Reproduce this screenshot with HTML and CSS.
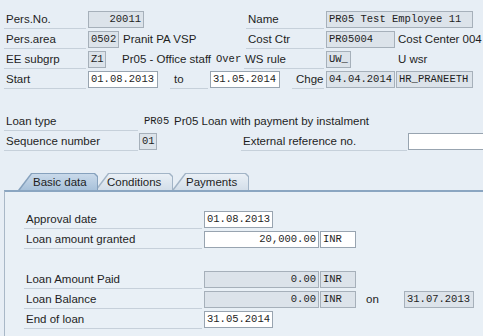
FILE: index.html
```html
<!DOCTYPE html>
<html>
<head>
  <meta charset="UTF-8">
  <title>Loan</title>
  <link rel="stylesheet" href="styles.css">
</head>
<body>
  <div class="screen">
    <div class="header">
      <div class="row">
        <span class="lbl w82">Pers.No.</span>
        <span class="fld ro right w56">20011</span>
        <span class="lbl w78 ml102">Name</span>
        <span class="fld ro w147">PR05 Test Employee 11</span>
      </div>
      <div class="row">
        <span class="lbl w82">Pers.area</span>
        <span class="fld ro w31">0502</span>
        <span class="txt w123 ml4">Pranit PA VSP</span>
        <span class="lbl w78">Cost Ctr</span>
        <span class="fld ro w69">PR05004</span>
        <span class="txt ml3">Cost Center 004</span>
      </div>
      <div class="row">
        <span class="lbl w82">EE subgrp</span>
        <span class="fld ro w18">Z1</span>
        <span class="txt w94 ml16">Pr05 - Office staff</span>
        <span class="mono w28">Over</span>
        <span class="lbl w80 tight">WS rule</span>
        <span class="fld ro w25">UW_</span>
        <span class="txt ml47">U wsr</span>
      </div>
      <div class="row">
        <span class="lbl w82">Start</span>
        <span class="fld w70">01.08.2013</span>
        <span class="lbl w38 ml12 pad4">to</span>
        <span class="fld w70">31.05.2014</span>
        <span class="lbl w32 ml12 pad4">Chge</span>
        <span class="fld ro w69">04.04.2014</span>
        <span class="fld ro w77 ml1">HR_PRANEETH</span>
      </div>
    </div>

    <div class="loan">
      <div class="row">
        <span class="lbl w134">Loan type</span>
        <span class="mono ml6 w28">PR05</span>
        <span class="txt ml2">Pr05 Loan with payment by instalment</span>
      </div>
      <div class="row">
        <span class="lbl w134">Sequence number</span>
        <span class="fld ro w18 ml1">01</span>
        <span class="lbl w166 ml84">External reference no.</span>
        <span class="fld w80 ml1"></span>
      </div>
    </div>

    <div class="tabs">
      <div class="tab active"><span>Basic data</span></div>
      <div class="tab second"><span>Conditions</span></div>
      <div class="tab third"><span>Payments</span></div>
    </div>

    <div class="panel">
      <div class="row">
        <span class="lbl w178">Approval date</span>
        <span class="fld w69">01.08.2013</span>
      </div>
      <div class="row">
        <span class="lbl w178">Loan amount granted</span>
        <span class="fld right w115">20,000.00</span>
        <span class="fld w36 ml1">INR</span>
      </div>
      <div class="row"></div>
      <div class="row">
        <span class="lbl w178">Loan Amount Paid</span>
        <span class="fld ro right w115">0.00</span>
        <span class="fld ro w36 ml1">INR</span>
      </div>
      <div class="row">
        <span class="lbl w178">Loan Balance</span>
        <span class="fld ro right w115">0.00</span>
        <span class="fld ro w36 ml1">INR</span>
        <span class="txt w36 ml10">on</span>
        <span class="fld ro w70">31.07.2013</span>
      </div>
      <div class="row">
        <span class="lbl w178">End of loan</span>
        <span class="fld w69">31.05.2014</span>
      </div>
    </div>
  </div>
</body>
</html>
```

FILE: styles.css
```css
:root {
  --bg: #e7eef5;
  --text: #1e1e1e;
  --line: #c6d0da;
  --ro-fill: #dce3ea;
  --ro-border: #a6b0ba;
  --in-border: #98a4b0;
  --tab-line: #8ba6c1;
}

body {
  margin: 0;
  width: 483px;
  height: 336px;
  overflow: hidden;
  background: var(--bg);
  color: var(--text);
  font-family: 'Liberation Sans', Arial, sans-serif;
  font-size: 11.5px;
}

.screen {
  padding: 10px 0 0 4px;
}

.row {
  display: flex;
  align-items: flex-start;
  height: 20px;
  white-space: nowrap;
}

.lbl {
  box-sizing: border-box;
  flex: none;
  height: 19px;
  line-height: 18px;
  padding-left: 2px;
  border-bottom: 1px solid var(--line);
  overflow: hidden;
}

.lbl.tight { padding-left: 1px; }
.lbl.pad4 { padding-left: 4px; }

.txt {
  flex: none;
  line-height: 18px;
}

.mono {
  flex: none;
  font-family: 'Liberation Mono', 'Courier New', monospace;
  font-size: 10.5px;
  line-height: 18px;
}

.fld {
  box-sizing: border-box;
  flex: none;
  height: 17px;
  margin-top: 1px;
  margin-left: 2px;
  padding: 0 2px;
  background: #fff;
  border: 1px solid var(--in-border);
  font-family: 'Liberation Mono', 'Courier New', monospace;
  font-size: 10.5px;
  line-height: 15px;
  overflow: hidden;
}

.fld.ro {
  background: var(--ro-fill);
  border-color: var(--ro-border);
}

.fld.right { text-align: right; }

.w18 { width: 18px; }
.w25 { width: 25px; }
.w28 { width: 28px; }
.w31 { width: 31px; }
.w32 { width: 32px; }
.w36 { width: 36px; }
.w38 { width: 38px; }
.w56 { width: 56px; }
.w69 { width: 69px; }
.w70 { width: 70px; }
.w77 { width: 77px; }
.w78 { width: 78px; }
.w80 { width: 80px; }
.w82 { width: 82px; }
.w94 { width: 94px; }
.w115 { width: 115px; }
.w123 { width: 123px; }
.w134 { width: 134px; }
.w147 { width: 147px; }
.w166 { width: 166px; }
.w178 { width: 178px; }

.ml1 { margin-left: 1px; }
.ml2 { margin-left: 2px; }
.ml3 { margin-left: 3px; }
.ml4 { margin-left: 4px; }
.ml6 { margin-left: 6px; }
.ml10 { margin-left: 10px; }
.ml12 { margin-left: 12px; }
.ml16 { margin-left: 16px; }
.ml47 { margin-left: 47px; }
.ml84 { margin-left: 84px; }
.ml102 { margin-left: 102px; }

.loan {
  margin-top: 22px;
}

/* tab strip */
.tabs {
  display: flex;
  align-items: flex-end;
  margin-top: 21px;
  padding-left: 14px;
  height: 17px;
}

.tab {
  position: relative;
  box-sizing: border-box;
  height: 17px;
  padding: 1px 1px 0 1px;
  background: #a2b4c6;
  clip-path: polygon(0 100%, 13px 0, calc(100% - 3px) 0, 100% 3px, 100% 100%);
}

.tab span {
  display: block;
  height: 16px;
  line-height: 16px;
  padding-left: 14px;
  background: linear-gradient(#eaf0f6, #d3dee9);
  clip-path: polygon(1px 100%, 13px 0, calc(100% - 3px) 0, 100% 3px, 100% 100%);
}

.tab.active {
  z-index: 2;
  width: 80px;
  background: #86a1bd;
}

.tab.active span {
  background: linear-gradient(#c9d9ea, #a8c1da);
}

.tab.second {
  z-index: 1;
  width: 78px;
  margin-left: -3px;
}

.tab.second span { padding-left: 11px; }

.tab.third {
  width: 77px;
  margin-left: -1px;
}

.tab.third span { padding-left: 13px; }

.panel {
  box-sizing: border-box;
  height: 146px;
  border-top: 2px solid var(--tab-line);
  border-left: 1px solid #a9b8c7;
  padding: 18px 0 0 19px;
  background: #e9f0f6;
}
```
